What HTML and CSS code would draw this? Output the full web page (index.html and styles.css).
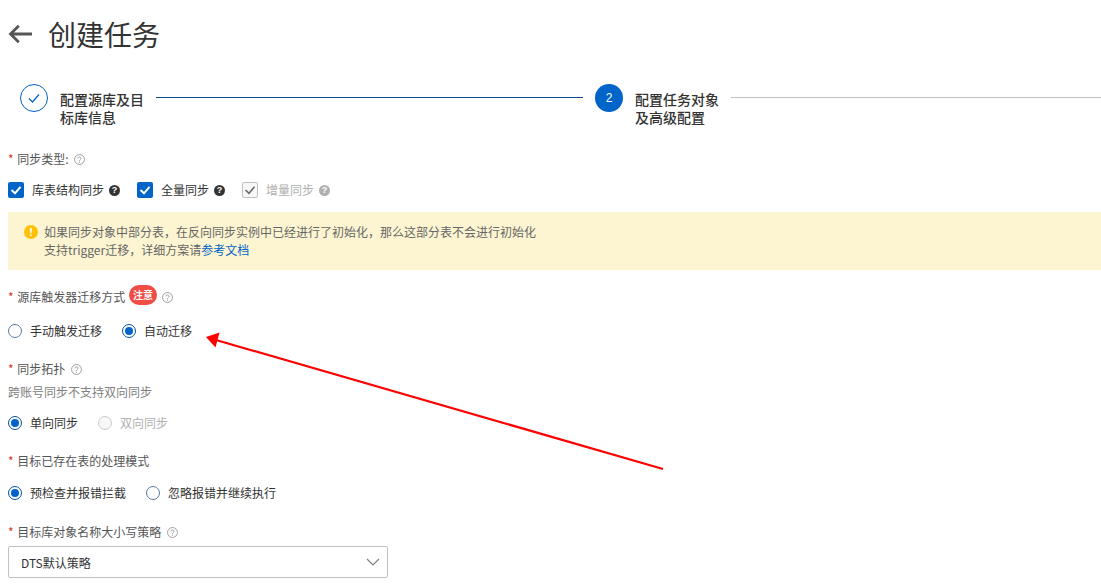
FILE: index.html
```html
<!DOCTYPE html>
<html lang="zh-CN">
<head>
<meta charset="utf-8">
<title>创建任务</title>
<link rel="stylesheet" href="styles.css">
</head>
<body>
<div class="page">
  <header class="title-row">
    <svg class="back" viewBox="0 0 24 20" width="24" height="20"><path d="M24 10H2.500M10.800 1.800 2.500 10l8.300 8.200" fill="none" stroke="#555" stroke-width="2.800"/></svg>
    <h1>创建任务</h1>
  </header>

  <div class="steps">
    <div class="step-circle done"><svg viewBox="0 0 14 14" width="14" height="14"><path d="M2 7.500 5.500 11 12 3.500" fill="none" stroke="#0064c8" stroke-width="1.200"/></svg></div>
    <div class="step-text">配置源库及目<br>标库信息</div>
    <div class="step-line active"></div>
    <div class="step-circle current">2</div>
    <div class="step-text">配置任务对象<br>及高级配置</div>
    <div class="step-line"></div>
  </div>

  <div class="label l1"><i>*</i> 同步类型: <svg class="help" viewBox="0 0 12 12" width="11" height="11"><use href="#q"/></svg></div>
  <div class="checks">
    <span class="check on"><svg viewBox="0 0 16 16" width="16" height="16"><path d="M3.500 8 7 11.300 12.500 4.800" fill="none" stroke="#fff" stroke-width="2"/></svg></span><span class="ctext">库表结构同步</span><span class="dot">?</span>
    <span class="check on c2"><svg viewBox="0 0 16 16" width="16" height="16"><path d="M3.500 8 7 11.300 12.500 4.800" fill="none" stroke="#fff" stroke-width="2"/></svg></span><span class="ctext">全量同步</span><span class="dot">?</span>
    <span class="check off c2"><svg viewBox="0 0 16 16" width="16" height="16"><path d="M3.500 8 7 11.300 12.500 4.800" fill="none" stroke="#666" stroke-width="1.500"/></svg></span><span class="ctext muted">增量同步</span><span class="dot grey">?</span>
  </div>

  <div class="alert">
    <span class="alert-icon">!</span>
    <div class="alert-text">如果同步对象中部分表，在反向同步实例中已经进行了初始化，那么这部分表不会进行初始化<br>支持trigger迁移，详细方案请<a>参考文档</a></div>
  </div>

  <div class="label l2"><i>*</i> 源库触发器迁移方式 <span class="badge">注意</span> <svg class="help" viewBox="0 0 12 12" width="11" height="11"><use href="#q"/></svg></div>
  <div class="radios r2">
    <span class="radio"></span><span class="rtext">手动触发迁移</span>
    <span class="radio on gap"></span><span class="rtext">自动迁移</span>
  </div>

  <div class="label l3"><i>*</i> 同步拓扑 <svg class="help" viewBox="0 0 12 12" width="11" height="11"><use href="#q"/></svg></div>
  <div class="hint">跨账号同步不支持双向同步</div>
  <div class="radios r3">
    <span class="radio on"></span><span class="rtext">单向同步</span>
    <span class="radio dis gap"></span><span class="rtext muted">双向同步</span>
  </div>

  <div class="label l4"><i>*</i> 目标已存在表的处理模式</div>
  <div class="radios r4">
    <span class="radio on"></span><span class="rtext">预检查并报错拦截</span>
    <span class="radio gap"></span><span class="rtext">忽略报错并继续执行</span>
  </div>

  <div class="label l5"><i>*</i> 目标库对象名称大小写策略 <svg class="help" viewBox="0 0 12 12" width="11" height="11"><use href="#q"/></svg></div>
  <div class="select">
    <span>DTS默认策略</span>
    <svg viewBox="0 0 14 8" width="14" height="8"><path d="M1 1l6 6 6-6" fill="none" stroke="#808080" stroke-width="1.200"/></svg>
  </div>
</div>

<svg class="annotation" viewBox="0 0 1101 585" width="1101" height="585">
  <path d="M663 469 216 340" stroke="#f00" stroke-width="2.200" fill="none"/>
  <path d="M206 337 219.500 332.500 215.500 347.500z" fill="#f00"/>
</svg>

<svg class="defs" width="0" height="0">
  <symbol id="q" viewBox="0 0 12 12">
    <circle cx="6" cy="6" r="5.400" fill="none" stroke="#808080" stroke-width=".8"/>
    <path d="M4.300 4.800C4.300 3.800 5 3.200 6 3.200s1.700.6 1.700 1.500c0 1.300-1.700 1.300-1.700 2.600" fill="none" stroke="#808080" stroke-width=".8"/>
    <circle cx="6" cy="8.800" r=".55" fill="#808080"/>
  </symbol>
</svg>
</body>
</html>
```
FILE: styles.css
```css
* { box-sizing: border-box; }
html, body { margin: 0; padding: 0; height: 585px; overflow: hidden; background: #fff; }
body { font-family: "Noto Sans CJK SC", "Liberation Sans", sans-serif; font-size: 12px; color: #333; position: relative; }
.page { padding: 0 0 0 8px; width: 1101px; }

.title-row { display: flex; align-items: center; height: 34px; margin-top: 17px; }
.back { display: block; }
h1 { margin: 0 0 0 16px; font-size: 28px; font-weight: 400; line-height: 34px; color: #333; }

.steps { display: flex; align-items: flex-start; margin: 33px 0 0 12px; height: 48px; }
.step-circle { width: 28px; height: 28px; border-radius: 50%; flex: none; display: flex; align-items: center; justify-content: center; }
.step-circle.done { border: 1px solid #0064c8; }
.step-circle.current { background: #0064c8; color: #fff; font-size: 12px; font-family: "Liberation Sans", sans-serif; }
.step-text { font-size: 14px; font-weight: 500; line-height: 18px; margin: 6px 12px 0; color: #333; white-space: nowrap; flex: none; width: 84px; }
.step-line { height: 1px; background: #c1c1c1; margin-top: 13px; flex: 1; }
.step-line.active { background: #0d4d8f; flex: none; width: 427px; margin-right: 12px; }

.label { line-height: 18px; color: #555; display: flex; align-items: center; white-space: pre; }
.label i { color: #d93026; font-style: normal; margin-right: 1px; }
.help { margin-left: 3px; display: block; }
.l1 { margin-top: 18px; }
.l2 { margin-top: 18px; }
.l3 { margin-top: 21px; }
.l4 { margin-top: 21px; }
.l5 { margin-top: 22px; }

.checks { display: flex; align-items: center; height: 16px; margin-top: 14px; }
.check { width: 16px; height: 16px; border-radius: 2px; flex: none; display: block; }
.check svg { display: block; }
.check.on { background: #0064c8; }
.check.off { border: 1px solid #c1c1c1; background: #f7f7f7; }
.check.off svg { margin: -1px; }
.c2 { margin-left: 17px; }
.ctext { margin-left: 8px; line-height: 16px; color: #333; }
.muted { color: #b0b0b0; }
.dot { width: 11px; height: 11px; border-radius: 50%; background: #333; color: #fff; font-size: 9px; font-weight: 700; line-height: 11px; text-align: center; margin-left: 5px; flex: none; font-family: "Liberation Sans", sans-serif; }
.dot.grey { background: #b0b0b0; }

.alert { display: flex; align-items: flex-start; background: #fdf5d1; height: 58px; margin-top: 14px; padding: 11px 16px; }
.alert-icon { width: 14px; height: 14px; border-radius: 50%; background: #ffc107; color: #fff; font-weight: 700; font-size: 11px; line-height: 14px; text-align: center; flex: none; margin: 2px 6px 0 0; font-family: "Liberation Sans", sans-serif; }
.alert-text { line-height: 18px; color: #666; }
.alert-text a { color: #0064c8; }

.badge { background: #f04d45; color: #fff; height: 20px; width: 28px; border-radius: 10px; font-size: 10px; font-weight: 700; line-height: 20px; text-align: center; display: block; margin: -4px 0 0 1px; }
.l2 .help { margin-left: 5px; }

.radios { display: flex; align-items: center; height: 16px; }
.radio { width: 14px; height: 14px; border-radius: 50%; border: 1px solid #5a7ba0; background: #fff; flex: none; position: relative; display: block; }
.radio.on { border-color: #0b4f9b; }
.radio.on::after { content: ""; position: absolute; left: 2px; top: 2px; width: 8px; height: 8px; border-radius: 50%; background: #0064c8; }
.radio.dis { border-color: #c9ccd0; background: #f7f7f7; }
.radio.gap { margin-left: 20px; }
.rtext { margin-left: 8px; line-height: 16px; color: #333; }
.rtext.muted { color: #b0b0b0; }
.r2 { margin-top: 17px; }
.r3 { margin-top: 14px; }
.r4 { margin-top: 15px; }

.hint { margin-top: 5px; line-height: 18px; color: #808080; }

.select { width: 380px; height: 32px; margin-top: 5px; border: 1px solid #c1c1c1; border-radius: 2px; display: flex; align-items: center; justify-content: space-between; padding: 0 7px 0 12px; color: #333; }
.select svg { display: block; }

.annotation { position: absolute; left: 0; top: 0; pointer-events: none; }
.defs { position: absolute; }
```
